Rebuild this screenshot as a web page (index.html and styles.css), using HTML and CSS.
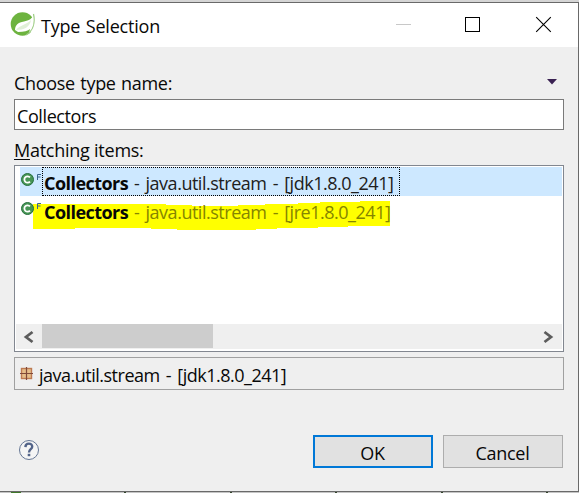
FILE: index.html
```html
<!DOCTYPE html>
<html lang="en">
<head>
<meta charset="utf-8">
<title>Type Selection</title>
<link rel="stylesheet" href="styles.css">
</head>
<body>
<main class="dialog">
  <header class="titlebar">
    <svg class="logo" width="26" height="26" viewBox="0 0 26 26">
      <circle cx="12.5" cy="13" r="11.8" fill="#6db33f"/>
      <path d="M25 2C22 8 19 9.500 14 10.500C8 11.500 5 14 5 19L8 21C14 21 18 20 20 18L19 22L24 20C26 14 26 7 25 2Z" fill="#fff"/>
      <path d="M6 19C10 14 16 14 21 9C20 16 14 19 6 19Z" fill="#e0f0d7"/>
      <path d="M23.500 3C25.500 12 23 20 16 24" fill="none" stroke="#9ccc83" stroke-width="1.200"/>
    </svg>
    <h1 class="title">Type Selection</h1>
    <svg class="controls" width="160" height="20" viewBox="0 0 160 20">
      <path d="M0 9.5H15" stroke="#c8c8c8"/>
      <rect x="69.5" y="2.5" width="14" height="14" fill="none" stroke="#000"/>
      <path d="M140.2 2.2L154.8 16.8M154.8 2.2L140.2 16.8" stroke="#000" stroke-width="1.1"/>
    </svg>
  </header>
  <section class="body">
    <div class="label-row"><label class="choose" for="name">Choose type name:</label>
      <svg width="10" height="6" viewBox="0 0 10 6"><path d="M0 0H10L5 5.5Z" fill="#3a2152"/></svg>
    </div>
    <div class="field" id="name"><span class="entered">Collectors</span></div>
    <div class="matching"><u>M</u>atching items:</div>
    <div class="list">
      <div class="row selected">
        <svg class="class-icon" width="22" height="29" viewBox="0 0 22 29"><circle cx="7.5" cy="12.5" r="6" fill="#479554" stroke="#27703e"/><path d="M10 10.4A3.2 3.2 0 1 0 10 14.6" fill="none" stroke="#fff" stroke-width="1.8"/><path d="M17.5 13V7.5H21M17.5 10H20.5" fill="none" stroke="#39658b"/></svg>
        <div class="item focus"><b>Collectors</b><span class="package">- java.util.stream - [jdk1.8.0_241]</span></div>
      </div>
      <div class="row">
        <svg class="marker" width="360" height="30" viewBox="0 0 360 30"><path d="M0 3H133V4H159V5H205V4H232V3H265V2H287V1H327V0H357V25H315V26H285V27H244V28H223V29H144V28H118V27H42V28H0Z" fill="#ff0"/></svg>
        <svg class="class-icon" width="22" height="29" viewBox="0 0 22 29"><circle cx="7.5" cy="12.5" r="6" fill="#479554" stroke="#27703e"/><path d="M10 10.4A3.2 3.2 0 1 0 10 14.6" fill="none" stroke="#fff" stroke-width="1.8"/><path d="M17.5 13V7.5H21M17.5 10H20.5" fill="none" stroke="#39658b"/></svg>
        <div class="item muted"><b>Collectors</b><span class="package">- java.util.stream - [jre1.8.0_241]</span></div>
      </div>
      <div class="scrollbar">
        <svg width="26" height="24" viewBox="0 0 26 24"><path d="M16.5 8L10 13L16.5 18" fill="none" stroke="#5c5c5c" stroke-width="2.8"/></svg>
        <div class="thumb"></div>
        <svg class="right" width="26" height="24" viewBox="0 0 26 24"><path d="M8.5 8L15 13L8.5 18" fill="none" stroke="#5c5c5c" stroke-width="2.8"/></svg>
      </div>
    </div>
    <div class="status">
      <svg width="13" height="13" viewBox="0 0 13 13"><rect x="1.5" y="1.5" width="10" height="10" fill="#e5bd8a" stroke="#bd7a52" stroke-width="1.4"/><path d="M6.5 0V13M0 6.5H13" stroke="#7f4939" stroke-width="1.2"/></svg>
      <span class="status-text">java.util.stream - [jdk1.8.0_241]</span>
    </div>
    <footer class="footer">
      <svg width="22" height="22" viewBox="0 0 22 22"><circle cx="11" cy="11" r="9.5" fill="#f5f5f5" stroke="#667795"/><path d="M7.4 8.1C7.5 3.4 14.4 3.7 14.2 7.7C14.1 10.3 11 10.2 11 13.5" fill="none" stroke="#536489" stroke-width="2.4"/><rect x="9.7" y="14.8" width="2.6" height="2.4" fill="#536489"/></svg>
      <button class="button primary">OK</button>
      <button class="button">Cancel</button>
    </footer>
  </section>
</main>
<div class="backdrop"><i></i><i></i><i></i><i></i><i></i><i></i></div>
</body>
</html>
```
FILE: styles.css
```css
* { box-sizing: border-box; }
body { margin: 0; height: 493px; overflow: hidden; background: #d5d5d5; padding-top: 2px; font: 18px/24px "Open Sans", "Noto Sans", sans-serif; color: #080808; white-space: nowrap; }
svg { display: block; flex: none; }
.dialog { width: 579px; height: 490px; border: 1px solid #696969; border-left: 0; background: #efefef; }
.titlebar { height: 44px; background: #fff; display: flex; align-items: flex-start; padding: 8px 0 0 10px; }
.title { margin: 3px 0 0 5px; width: 355px; font-size: 18px; font-weight: 400; line-height: 24px; letter-spacing: -.2px; word-spacing: 1px; }
.controls { margin-top: 4px; }
.body { padding: 24px 14px 0; }
.label-row { height: 28px; display: flex; justify-content: space-between; padding-right: 7px; }
.label-row svg { margin-top: 8px; }
.choose { letter-spacing: -.3px; word-spacing: 1px; }
.field { height: 31px; border: 1px solid #7a7a7a; background: #fff; padding: 4px 2px; }
.entered { letter-spacing: -.4px; }
.matching { height: 35px; padding-top: 8px; letter-spacing: -.25px; }
.matching u { text-decoration-thickness: 1px; text-underline-offset: 2px; }
.list { height: 187px; border: 1px solid #828790; background: #fff; padding: 1px 1px 2px; display: flex; flex-direction: column; }
.row { height: 29px; margin-left: 4px; display: flex; position: relative; }
.selected { background: #cde8ff; }
.class-icon { position: relative; }
.item { width: 358px; height: 29px; padding: 4px 0 0 2px; display: flex; gap: 6px; position: relative; }
.item b { width: 84px; letter-spacing: -.55px; }
.focus { border: 1px dotted #000; padding: 3px 0 0 1px; }
.package { color: #202020; letter-spacing: -.48px; word-spacing: 2px; }
.muted .package { color: #858500; }
.marker { position: absolute; left: 13px; top: 5px; }
.scrollbar { height: 25px; margin-top: auto; display: flex; background: #efefef; }
.thumb { width: 171px; height: 24px; background: #cdcdcd; }
.right { margin-left: auto; }
.status { height: 33px; margin-top: 5px; border: 1px solid #a0a0a0; display: flex; padding: 5px; }
.status svg { margin-top: 4px; }
.status-text { margin-left: 6px; letter-spacing: -.5px; word-spacing: 2px; }
.footer { height: 78px; margin-top: 45px; display: flex; gap: 10px; padding-left: 4px; padding-right: 1px; }
.footer svg { margin-top: 4px; margin-right: auto; }
.button { width: 120px; height: 33px; background: #e1e1e1; border: 1px solid #adadad; padding: 3px 1px 0 0; font: inherit; color: inherit; letter-spacing: -.3px; }
.primary { border: 2px solid #0078d7; }
.backdrop { height: 1px; display: flex; justify-content: space-between; padding: 0 31px 0 11px; background: #c5c5c5; }
.backdrop i { width: 2px; background: #33442c; }
.backdrop i:first-child { width: 10px; background: #3f7829; }
```
